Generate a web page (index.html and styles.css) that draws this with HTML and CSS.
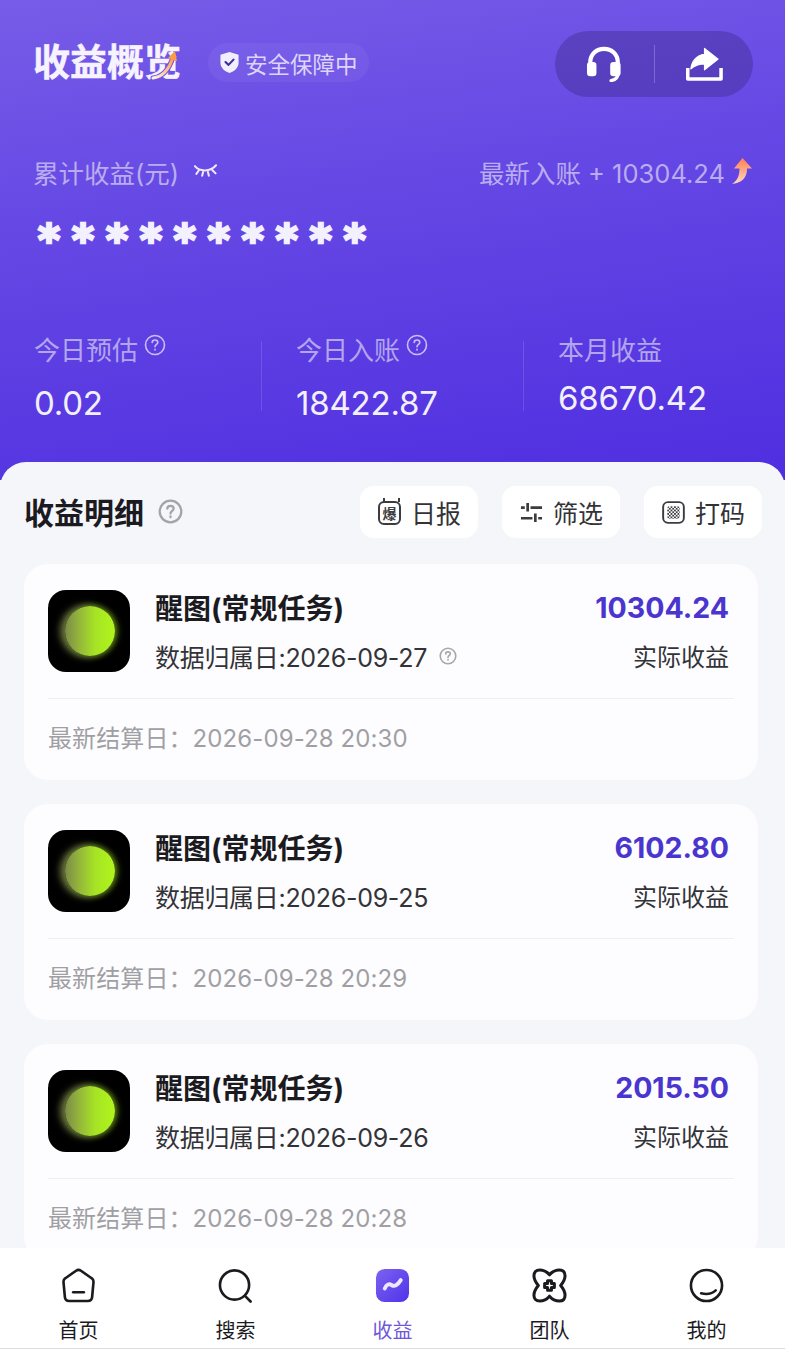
FILE: index.html
```html
<!DOCTYPE html>
<html lang="zh-CN">
<head>
    <meta charset="UTF-8">
    <meta name="viewport" content="width=device-width, initial-scale=1.0">
    <title>收益概览</title>
    <link rel="stylesheet" href="styles.css">
</head>
<body>
    <div class="page">
        <header class="hero">
            <div class="top-row">
                <div class="brand">
                    <h1 class="brand-title">收益概览
                        <svg class="brand-arrow" viewBox="0 0 44 36" fill="none">
                            <defs>
                                <linearGradient id="brandLine" x1="0" y1="1" x2="1" y2="0">
                                    <stop offset="0" stop-color="#fff1e2"/>
                                    <stop offset="1" stop-color="#ff9a45"/>
                                </linearGradient>
                            </defs>
                            <path d="M15 33C24 32 31 25 35 12" stroke="#6c50e5" stroke-width="5" stroke-linecap="round"/>
                            <path d="M15 33C24 32 31 25 35 12" stroke="url(#brandLine)" stroke-width="3" stroke-linecap="round"/>
                            <path d="M30 13L37 6L39 16Z" fill="#ff9a45"/>
                        </svg>
                    </h1>
                    <div class="safe-badge">
                        <svg class="safe-icon" viewBox="0 0 22 24">
                            <path d="M11 1L20.500 4V12C20.500 17.500 16 21.500 11 23C6 21.500 1.500 17.500 1.500 12V4Z" fill="#f1eefd"/>
                            <path d="M6.800 11.500L10 14.500L15.200 9" fill="none" stroke="#3d2d9c" stroke-width="2.200" stroke-linecap="round" stroke-linejoin="round"/>
                        </svg>
                        <span>安全保障中</span>
                    </div>
                </div>
                <div class="action-pill">
                    <svg class="pill-icon" viewBox="0 0 38 38" fill="none">
                        <path d="M4 21V17C4 8.500 10.500 3 18.500 3C26.500 3 33 8.500 33 17V21" stroke="#fff" stroke-width="4.500"/>
                        <rect x="0.500" y="17" width="10" height="15" rx="3.500" fill="#fff"/>
                        <rect x="25" y="17" width="11" height="15" rx="3.500" fill="#fff"/>
                        <path d="M33 30C33 33 30.500 35.500 26 36.500" stroke="#fff" stroke-width="3.500" stroke-linecap="round"/>
                    </svg>
                    <span class="pill-line"></span>
                    <svg class="pill-icon" viewBox="0 0 38 36" fill="none">
                        <path d="M1.800 22V33.500H36V22" stroke="#fff" stroke-width="3.600" stroke-linejoin="round"/>
                        <path d="M19 2L33 13L19 24V18C13 18 9 19.500 5 23C6 15 11 9 19 8Z" fill="#fff" stroke="#fff" stroke-width="1.200" stroke-linejoin="round"/>
                    </svg>
                </div>
            </div>

            <div class="total-row">
                <div class="total-label">
                    <span>累计收益(元)</span>
                    <svg class="eye-icon" viewBox="0 0 26 16" fill="none" stroke="#efeafd" stroke-width="2.100" stroke-linecap="round">
                        <path d="M2 3C7 9 18 9 24 2"/>
                        <path d="M6 7.500L3.500 11M10.500 9L9.500 13M15.500 9L16.500 13M20 7L23.500 10.500"/>
                    </svg>
                </div>
                <div class="latest">
                    <span>最新入账 + 10304.24</span>
                    <svg class="latest-arrow" viewBox="0 0 22 28">
                        <defs>
                            <linearGradient id="latestFill" x1="0" y1="0" x2="0" y2="1">
                                <stop offset="0" stop-color="#ff7f50"/>
                                <stop offset="1" stop-color="#ffd9c4"/>
                            </linearGradient>
                        </defs>
                        <path d="M11.500 1L21 11.500H16C16 19 13 25.500 1 27C6 24 8.500 19 8.500 11.500H3Z" fill="url(#latestFill)"/>
                    </svg>
                </div>
            </div>

            <div class="stars">**********</div>

            <div class="stats">
                <div class="stat">
                    <div class="stat-label">今日预估 <svg class="help help-light" viewBox="0 0 22 22"><circle cx="11" cy="11" r="9.500"/><path d="M8.200 8.500C8.200 6.800 9.500 6 11 6C12.600 6 13.800 7 13.800 8.400C13.800 10.300 11 10.500 11 12.800"/><path d="M11 15.400V16"/></svg></div>
                    <div class="stat-value">0.02</div>
                </div>
                <div class="stat">
                    <div class="stat-label">今日入账 <svg class="help help-light" viewBox="0 0 22 22"><circle cx="11" cy="11" r="9.500"/><path d="M8.200 8.500C8.200 6.800 9.500 6 11 6C12.600 6 13.800 7 13.800 8.400C13.800 10.300 11 10.500 11 12.800"/><path d="M11 15.400V16"/></svg></div>
                    <div class="stat-value">18422.87</div>
                </div>
                <div class="stat stat-month">
                    <div class="stat-label">本月收益</div>
                    <div class="stat-value">68670.42</div>
                </div>
            </div>
        </header>

        <main class="sheet">
            <div class="sheet-head">
                <div class="sheet-title">
                    <h2>收益明细</h2>
                    <svg class="help help-title" viewBox="0 0 22 22"><circle cx="11" cy="11" r="9.500"/><path d="M8.200 8.500C8.200 6.800 9.500 6 11 6C12.600 6 13.800 7 13.800 8.400C13.800 10.300 11 10.500 11 12.800"/><path d="M11 15.400V16"/></svg>
                </div>
                <div class="tools">
                    <div class="tool">
                        <span class="tool-cal">爆</span>
                        <span>日报</span>
                    </div>
                    <div class="tool">
                        <svg class="tool-icon" viewBox="0 0 24 24" fill="none" stroke="#3c3c40" stroke-width="2.800">
                            <path d="M1 7H5M11 7H23M8 2V11M1 18H13M19 18H23M16 13V22"/>
                        </svg>
                        <span>筛选</span>
                    </div>
                    <div class="tool">
                        <svg class="tool-icon" viewBox="0 0 24 24">
                            <defs>
                                <pattern id="checks" width="3.600" height="3.600" patternUnits="userSpaceOnUse">
                                    <rect width="1.800" height="1.800" fill="#3c3c40"/>
                                    <rect x="1.800" y="1.800" width="1.800" height="1.800" fill="#3c3c40"/>
                                </pattern>
                            </defs>
                            <rect x="1.200" y="1.200" width="21.600" height="21.600" rx="5" fill="none" stroke="#3c3c40" stroke-width="2"/>
                            <rect x="5.500" y="5.500" width="13" height="13" rx="2" fill="url(#checks)"/>
                        </svg>
                        <span>打码</span>
                    </div>
                </div>
            </div>

            <div class="card">
                <div class="card-main">
                    <div class="app-icon"><div class="app-dot"></div></div>
                    <div class="card-info">
                        <div class="card-name">醒图(常规任务)</div>
                        <div class="card-date">数据归属日:2026-09-27<svg class="help help-date" viewBox="0 0 22 22"><circle cx="11" cy="11" r="9.500"/><path d="M8.200 8.500C8.200 6.800 9.500 6 11 6C12.600 6 13.800 7 13.800 8.400C13.800 10.300 11 10.500 11 12.800"/><path d="M11 15.400V16"/></svg></div>
                    </div>
                    <div class="card-money">
                        <div class="card-amount">10304.24</div>
                        <div class="card-kind">实际收益</div>
                    </div>
                </div>
                <div class="card-foot">最新结算日<span class="colon">：</span>2026-09-28 20:30</div>
            </div>

            <div class="card">
                <div class="card-main">
                    <div class="app-icon"><div class="app-dot"></div></div>
                    <div class="card-info">
                        <div class="card-name">醒图(常规任务)</div>
                        <div class="card-date">数据归属日:2026-09-25</div>
                    </div>
                    <div class="card-money">
                        <div class="card-amount">6102.80</div>
                        <div class="card-kind">实际收益</div>
                    </div>
                </div>
                <div class="card-foot">最新结算日<span class="colon">：</span>2026-09-28 20:29</div>
            </div>

            <div class="card">
                <div class="card-main">
                    <div class="app-icon"><div class="app-dot"></div></div>
                    <div class="card-info">
                        <div class="card-name">醒图(常规任务)</div>
                        <div class="card-date">数据归属日:2026-09-26</div>
                    </div>
                    <div class="card-money">
                        <div class="card-amount">2015.50</div>
                        <div class="card-kind">实际收益</div>
                    </div>
                </div>
                <div class="card-foot">最新结算日<span class="colon">：</span>2026-09-28 20:28</div>
            </div>
        </main>

        <nav class="tabbar">
            <div class="tab">
                <svg class="tab-icon" viewBox="0 0 36 36" fill="none" stroke="#1b1b1f" stroke-width="2.700" stroke-linejoin="round" stroke-linecap="round">
                    <path d="M15.500 2.800C17 1.700 19 1.700 20.500 2.800L31.500 10.500C33 11.500 33.600 13 33.400 14.700L32 30C31.800 32.500 30 34 27.500 34H8.500C6 34 4.200 32.500 4 30L2.600 14.700C2.400 13 3 11.500 4.500 10.500Z"/>
                    <path d="M12.500 25H23.500"/>
                </svg>
                <span>首页</span>
            </div>
            <div class="tab">
                <svg class="tab-icon" viewBox="0 0 36 36" fill="none" stroke="#1b1b1f" stroke-width="2.700" stroke-linecap="round">
                    <circle cx="17" cy="17.500" r="15"/>
                    <path d="M28 29L33.500 34.500"/>
                </svg>
                <span>搜索</span>
            </div>
            <div class="tab tab-active">
                <svg class="tab-icon" viewBox="0 0 36 36">
                    <defs>
                        <linearGradient id="tabFill" x1="0" y1="0" x2="1" y2="1">
                            <stop offset="0" stop-color="#7d62f0"/>
                            <stop offset="1" stop-color="#4e33ea"/>
                        </linearGradient>
                    </defs>
                    <rect x="1" y="1" width="34" height="34" rx="9" fill="url(#tabFill)"/>
                    <path d="M10 21C12 16.500 14.500 16 17 17.500C20 19.500 23 18 26.500 12.500" fill="none" stroke="#ece6ff" stroke-width="4" stroke-linecap="round"/>
                </svg>
                <span>收益</span>
            </div>
            <div class="tab">
                <svg class="tab-icon" viewBox="0 0 36 36" fill="none" stroke="#1b1b1f" stroke-width="3.100" stroke-linejoin="round">
                    <path d="M18 7C21 3.500 24 2 28 2C32 2 34 4.500 34 8C34 12 32 15 29.500 18C32 21 34 24 34 28C34 31.500 32 34 28 34C24 34 21 32.500 18 29C15 32.500 12 34 8 34C4 34 2 31.500 2 28C2 24 4 21 6.500 18C4 15 2 12 2 8C2 4.500 4 2 8 2C12 2 15 3.500 18 7Z"/>
                    <path d="M16 13H20V16H23V20H20V23H16V20H13V16H16Z"/>
                </svg>
                <span>团队</span>
            </div>
            <div class="tab">
                <svg class="tab-icon" viewBox="0 0 36 36" fill="none" stroke="#1b1b1f" stroke-width="2.700" stroke-linecap="round">
                    <circle cx="18" cy="18" r="16"/>
                    <path d="M12.500 26C18 27.500 23 27 27.500 23"/>
                </svg>
                <span>我的</span>
            </div>
        </nav>
    </div>
</body>
</html>
```

FILE: styles.css
```css
* {
    margin: 0;
    padding: 0;
    box-sizing: border-box;
}

body {
    font-family: "Inter", "Noto Sans CJK SC", sans-serif;
    background: #fff;
}

.page {
    position: relative;
    width: 785px;
    height: 1360px;
    overflow: hidden;
    background: #f5f6fa;
}

/* top purple area */
.hero {
    height: 480px;
    padding: 31px 32px 0 33px;
    background: linear-gradient(172deg, #775ce8 0%, #6548e4 40%, #4f2ee0 100%);
}

.top-row {
    display: flex;
    justify-content: space-between;
    align-items: center;
    height: 66px;
}

.brand {
    display: flex;
    align-items: center;
    gap: 27px;
    padding-bottom: 3px;
}

.brand-title {
    position: relative;
    font-size: 37px;
    line-height: 46px;
    font-weight: 700;
    color: #f6f3ff;
    -webkit-text-stroke: 0.5px #f6f3ff;
}

.brand-arrow {
    position: absolute;
    right: -1px;
    top: 5px;
    width: 44px;
    height: 36px;
}

.safe-badge {
    display: flex;
    align-items: center;
    gap: 5px;
    height: 39px;
    padding: 0 11px;
    border-radius: 20px;
    background: rgba(255, 255, 255, 0.05);
    color: #dcd5f9;
    font-size: 22.5px;
}

.safe-icon {
    width: 21px;
    height: 23px;
}

.action-pill {
    display: flex;
    align-items: center;
    justify-content: space-between;
    width: 198px;
    height: 66px;
    padding: 0 30px 0 31px;
    border-radius: 33px;
    background: rgba(62, 44, 140, 0.42);
}

.pill-icon {
    width: 37px;
    height: 36px;
}

.pill-line {
    width: 1px;
    height: 38px;
    background: rgba(255, 255, 255, 0.22);
}

.total-row {
    display: flex;
    justify-content: space-between;
    align-items: center;
    height: 36px;
    margin-top: 56px;
    color: #b9acf0;
    font-size: 25.5px;
}

.total-label {
    display: flex;
    align-items: center;
    gap: 14px;
}

.eye-icon {
    width: 25px;
    height: 16px;
}

.latest {
    display: flex;
    align-items: center;
    gap: 6px;
}

.latest-arrow {
    width: 22px;
    height: 28px;
}

.stars {
    height: 50px;
    margin-top: 27px;
    padding-left: 5px;
    color: #f4f1ff;
    font-family: "DejaVu Sans", sans-serif;
    font-size: 42px;
    font-weight: 700;
    line-height: 50px;
    letter-spacing: 12px;
    -webkit-text-stroke: 2.6px #f4f1ff;
}

.stats {
    display: grid;
    grid-template-columns: 228px 262px 1fr;
    grid-template-rows: 70px;
    margin-top: 75px;
}

.stat {
    padding-left: 34px;
    border-left: 1px solid rgba(255, 255, 255, 0.13);
}

.stat:first-child {
    padding-left: 1px;
    border-left: none;
}

.stat-label {
    display: flex;
    align-items: center;
    gap: 2px;
    height: 14px;
    color: #b3a5ee;
    font-size: 26px;
}

.stat-value {
    margin-top: 26px;
    color: #f2efff;
    font-size: 33px;
    line-height: 44px;
    letter-spacing: -0.2px;
}

.stat-month .stat-value {
    margin-top: 21px;
}

.help {
    fill: none;
    stroke-width: 1.600;
    stroke-linecap: round;
}

.help-light {
    width: 22px;
    height: 22px;
    margin: -6px 0 0 4px;
    stroke: #c9bff5;
}

.help-title {
    width: 25px;
    height: 25px;
    stroke: #a3a3a8;
    stroke-width: 2;
}

.help-date {
    width: 18px;
    height: 18px;
    margin-left: 12px;
    stroke: #a8a8ac;
    stroke-width: 2;
}

/* white sheet with the list */
.sheet {
    height: 900px;
    margin-top: -18px;
    padding: 0 27px 0 24px;
    border-radius: 26px 26px 0 0;
    background: #f5f6fa;
}

.sheet-head {
    display: flex;
    justify-content: space-between;
    align-items: flex-start;
    height: 102px;
    padding-top: 24px;
    margin-right: -4px;
}

.sheet-title {
    display: flex;
    align-items: center;
    gap: 14px;
    height: 50px;
}

.sheet-title h2 {
    color: #1b1b1f;
    font-size: 30px;
    font-weight: 700;
}

.tools {
    display: flex;
    gap: 24px;
}

.tool {
    display: flex;
    align-items: center;
    justify-content: center;
    gap: 10px;
    width: 118px;
    height: 52px;
    padding-left: 1px;
    border-radius: 14px;
    background: #fff;
    color: #333337;
    font-size: 25px;
}

.tool-icon {
    width: 23px;
    height: 23px;
}

.tool-cal {
    position: relative;
    display: flex;
    align-items: center;
    justify-content: center;
    width: 23px;
    height: 24px;
    margin-top: 2px;
    border: 2px solid #3c3c40;
    border-radius: 6px;
    color: #3c3c40;
    font-size: 14px;
    font-weight: 700;
}

.tool-cal::before {
    content: '';
    position: absolute;
    top: -5px;
    left: 3px;
    width: 13px;
    height: 4px;
    border-left: 2px solid #3c3c40;
    border-right: 2px solid #3c3c40;
}

.card {
    height: 216px;
    margin-bottom: 24px;
    padding: 26px 24px 0;
    border-radius: 24px;
    background: #fdfdff;
}

.card-main {
    display: flex;
    height: 109px;
    border-bottom: 1px solid #f0f0f3;
}

.app-icon {
    display: flex;
    align-items: center;
    justify-content: center;
    flex-shrink: 0;
    width: 82px;
    height: 82px;
    padding-left: 2px;
    border-radius: 18px;
    background: #000;
}

.app-dot {
    width: 50px;
    height: 50px;
    border-radius: 50%;
    background: linear-gradient(90deg, #7c8a48 0%, #95b83a 30%, #a6e325 60%, #b0f51c 100%);
    box-shadow: -4px 0 7px 1px rgba(112, 124, 66, 0.9), 2px 0 6px rgba(170, 240, 30, 0.6);
    filter: blur(0.6px);
}

.card-info {
    flex: 1;
    padding-left: 25px;
}

.card-name {
    height: 36px;
    margin-top: 1px;
    color: #1b1b1f;
    font-size: 28px;
    font-weight: 700;
    line-height: 36px;
}

.card-date {
    display: flex;
    align-items: center;
    height: 36px;
    margin-top: 11px;
    color: #333337;
    font-size: 25px;
    letter-spacing: -0.3px;
}

.card-money {
    padding-right: 5px;
    text-align: right;
}

.card-amount {
    height: 36px;
    color: #4a35cf;
    font-size: 28.5px;
    font-weight: 700;
    line-height: 36px;
}

.card-kind {
    height: 36px;
    margin-top: 14px;
    color: #333337;
    font-size: 24px;
    line-height: 36px;
}

.card-foot {
    height: 80px;
    color: #a0a0a4;
    font-size: 24px;
    line-height: 76px;
    letter-spacing: 0.1px;
}

.colon {
    font-family: "Noto Sans CJK TC", sans-serif;
}

/* bottom nav, sits over the last card */
.tabbar {
    position: absolute;
    left: 0;
    bottom: 0;
    display: grid;
    grid-template-columns: repeat(5, 157px);
    width: 785px;
    height: 112px;
    padding-top: 20px;
    background: #fff;
}

.tabbar::after {
    content: '';
    position: absolute;
    left: 0;
    bottom: 11px;
    width: 100%;
    height: 1px;
    background: #dcdcde;
}

.tab {
    display: flex;
    flex-direction: column;
    align-items: center;
    color: #1b1b1f;
    font-size: 20px;
    line-height: 28px;
}

.tab-icon {
    width: 35px;
    height: 35px;
    margin-bottom: 14px;
}

.tab-active {
    color: #6e57d8;
}
```
